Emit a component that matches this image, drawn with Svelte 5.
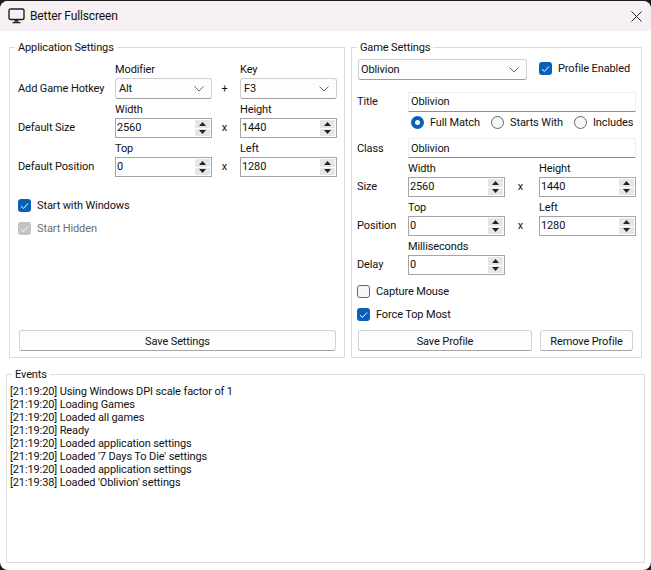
<script>
  const log = [
    "[21:19:20] Using Windows DPI scale factor of 1",
    "[21:19:20] Loading Games",
    "[21:19:20] Loaded all games",
    "[21:19:20] Ready",
    "[21:19:20] Loaded application settings",
    "[21:19:20] Loaded '7 Days To Die' settings",
    "[21:19:20] Loaded application settings",
    "[21:19:38] Loaded 'Oblivion' settings"
  ];
</script>

{#snippet spin(value)}
  <div class="spin">
    <span class="val">{value}</span>
    <div class="arrows">
      <div class="arrow"><svg width="7" height="4" viewBox="0 0 7 4"><path d="M3.500 0 7 4H0z" fill="#222"/></svg></div>
      <div class="arrow"><svg width="7" height="4" viewBox="0 0 7 4"><path d="M0 0h7L3.500 4z" fill="#222"/></svg></div>
    </div>
  </div>
{/snippet}

{#snippet combo(value, cls = "")}
  <div class="combo {cls}">
    <span>{value}</span>
    <svg width="10" height="6" viewBox="0 0 10 6"><path d="M.5.5 5 5 9.500.5" fill="none" stroke="#666" stroke-width="1"/></svg>
  </div>
{/snippet}

{#snippet check(label, state = "on")}
  <div class="check {state}">
    <span class="box">
      {#if state !== "off"}
        <svg width="9" height="8" viewBox="0 0 9 8"><path d="M1 4.200 3.400 6.500 8 1.500" fill="none" stroke="#fff" stroke-width="1"/></svg>
      {/if}
    </span>
    <span>{label}</span>
  </div>
{/snippet}

{#snippet radio(label, on = false)}
  <div class="radio">
    <span class="dot" class:on></span>
    <span>{label}</span>
  </div>
{/snippet}

<div class="window">
  <header class="title">
    <svg class="monitor" width="17" height="16" viewBox="0 0 17 16">
      <rect x="1" y="1" width="15" height="10.500" rx="1.500" fill="none" stroke="#222" stroke-width="1.400"/>
      <path d="M6.500 12h4v1.800h-4zM4.500 14h8v1.200h-8z" fill="#222"/>
    </svg>
    <span class="name">Better Fullscreen</span>
    <svg class="close" width="11" height="11" viewBox="0 0 11 11"><path d="M.5.5l10 10M10.500.5l-10 10" stroke="#222" stroke-width="1" fill="none"/></svg>
  </header>

  <div class="top">
    <section class="group app">
      <span class="legend">Application Settings</span>
      <div class="form">
        <span class="cap c2">Modifier</span><span class="cap c4">Key</span>
        <span class="lab c1">Add Game Hotkey</span>
        {@render combo("Alt")}
        <span class="sep">+</span>
        {@render combo("F3")}
      </div>
      <div class="form">
        <span class="cap c2">Width</span><span class="cap c4">Height</span>
        <span class="lab c1">Default Size</span>
        {@render spin("2560")}
        <span class="sep">x</span>
        {@render spin("1440")}
      </div>
      <div class="form">
        <span class="cap c2">Top</span><span class="cap c4">Left</span>
        <span class="lab c1">Default Position</span>
        {@render spin("0")}
        <span class="sep">x</span>
        {@render spin("1280")}
      </div>
      <div class="checks">
        {@render check("Start with Windows")}
        {@render check("Start Hidden", "dis")}
      </div>
      <button class="btn save">Save Settings</button>
    </section>

    <section class="group game">
      <span class="legend">Game Settings</span>
      <div class="profile">
        {@render combo("Oblivion", "wide")}
        {@render check("Profile Enabled")}
      </div>
      <div class="line title-row">
        <span class="lab">Title</span>
        <div class="text">Oblivion</div>
      </div>
      <div class="radios">
        {@render radio("Full Match", true)}
        {@render radio("Starts With")}
        {@render radio("Includes")}
      </div>
      <div class="line class-row">
        <span class="lab">Class</span>
        <div class="text">Oblivion</div>
      </div>
      <div class="form g">
        <span class="cap c2">Width</span><span class="cap c4">Height</span>
        <span class="lab c1">Size</span>
        {@render spin("2560")}
        <span class="sep">x</span>
        {@render spin("1440")}
      </div>
      <div class="form g">
        <span class="cap c2">Top</span><span class="cap c4">Left</span>
        <span class="lab c1">Position</span>
        {@render spin("0")}
        <span class="sep">x</span>
        {@render spin("1280")}
      </div>
      <div class="form g">
        <span class="cap c2">Milliseconds</span>
        <span class="lab c1">Delay</span>
        {@render spin("0")}
      </div>
      <div class="checks two">
        {@render check("Capture Mouse", "off")}
        {@render check("Force Top Most")}
      </div>
      <div class="btns">
        <button class="btn sp">Save Profile</button>
        <button class="btn rm">Remove Profile</button>
      </div>
    </section>
  </div>

  <section class="group events">
    <span class="legend">Events</span>
    <div class="log">
      {#each log as l}<div>{l}</div>{/each}
    </div>
  </section>
</div>

<style>
  :global(body) { margin: 0; background: #1c1c1c; }
  .window {
    width: 651px; height: 569px; margin-top: 1px; background: #fff;
    border-radius: 8px; overflow: hidden;
    font: 11px/15px Roboto, "Open Sans", sans-serif; color: #111; letter-spacing: -0.12px;
    display: flex; flex-direction: column;
  }
  .title {
    height: 30px; flex: none; background: #f6eff3; display: flex; align-items: center;
    padding: 0 9px 0 8px;
  }
  .monitor { margin-right: 5px; }
  .name { flex: 1; font-size: 12px; }
  .top { display: flex; gap: 6px; padding: 16px 9px 0 9px; height: 311px; flex: none; }
  .group { border: 1px solid #dcdcdc; position: relative; box-sizing: border-box; }
  .legend { position: absolute; top: -8px; left: 5px; background: #fff; padding: 0 3px; }
  .app { width: 336px; padding: 11px 7px 6px 8px; display: flex; flex-direction: column; }
  .game { width: 291px; padding: 11px 5px 6px 6px; display: flex; flex-direction: column; }
  .form { display: grid; grid-template-columns: 97px 97px 28px 97px; grid-template-rows: 19px 21px; align-items: center; }
  .form.g { grid-template-columns: 50px 97px 34px 97px; }
  .form + .form + .form, .g + .g { margin-top: -1px; }
  .cap { grid-row: 1; padding-top: 2px; }
  .c2 { grid-column: 2; }
  .c4 { grid-column: 4; }
  .c1 { grid-column: 1; grid-row: 2; }
  .g .c1 { margin-left: -1px; }
  .form + .form .c1, .g .c1, .form + .form .sep, .g .sep { align-self: start; margin-top: 2px; }
  .form .combo, .form .spin, .sep { grid-row: 2; }
  .form .spin { align-self: start; }
  .sep { text-align: center; padding-right: 3px; }
  .combo {
    height: 21px; box-sizing: border-box; border: 1px solid #cfcfcf; border-bottom-color: #9c9c9c;
    border-radius: 3px; background: #fdfdfd; display: flex; align-items: center;
    justify-content: space-between; padding: 0 7px 0 3px;
  }
  .wide { width: 169px; flex: none; padding-left: 2px; }
  .spin {
    height: 20px; box-sizing: border-box; border: 1px solid #a5a5a5; background: #fff;
    display: flex; justify-content: space-between; padding-left: 1px; align-items: stretch;
  }
  .val { line-height: 18px; }
  .arrows { width: 15px; display: flex; flex-direction: column; gap: 1px; padding: 1px; background: #fff; }
  .arrow { flex: 1; background: #e6e6e6; display: flex; align-items: center; justify-content: center; }
  .checks { display: flex; flex-direction: column; gap: 8px; margin-top: 20px; }
  .checks.two { margin-top: 8px; margin-left: -1px; }
  .check { display: flex; align-items: center; gap: 6px; height: 15px; white-space: nowrap; }
  .box {
    width: 13px; height: 13px; box-sizing: border-box; border-radius: 3px; flex: none;
    background: #0a5fb8; display: flex; align-items: center; justify-content: center;
  }
  .check.off .box { background: #f7f7f7; border: 1px solid #666; }
  .check.dis { color: #6d6d6d; }
  .check.dis .box { background: #c3c3c3; }
  .btn {
    height: 21px; box-sizing: border-box; border: 1px solid #d2d2d2; border-bottom-color: #a5a5a5;
    border-radius: 3px; background: #fdfdfd; font: inherit; letter-spacing: inherit; color: #111; padding: 1px 0 0;
  }
  .save { margin-top: auto; margin-left: 1px; width: 317px; }
  .profile { display: flex; gap: 12px; }
  .profile .check { margin-top: 2px; }
  .line { display: flex; }
  .title-row { margin-top: 12px; }
  .class-row { margin-top: 8px; }
  .line .lab { width: 51px; margin-left: -1px; line-height: 18px; padding-top: 1px; }
  .class-row .lab { padding-top: 2px; }
  .text {
    width: 228px; height: 20px; box-sizing: border-box; border: 1px solid #eee; border-bottom-color: #8f8f8f;
    padding-left: 2px; line-height: 18px;
  }
  .class-row .text { padding-top: 1px; }
  .radios { display: flex; margin: 3px 0 0 53px; height: 15px; align-items: center; white-space: nowrap; }
  .radio { display: flex; align-items: center; gap: 6px; flex: none; width: 80px; }
  .radio + .radio { width: 83px; }
  .dot { width: 13px; height: 13px; box-sizing: border-box; border-radius: 50%; border: 1px solid #666; background: #f7f7f7; flex: none; }
  .dot.on { border: 4px solid #0a5fb8; background: #fff; }
  .btns { display: flex; margin-top: auto; gap: 8px; }
  .sp { width: 174px; }
  .rm { width: 93px; }
  .events { margin: 16px 6px 7px 6px; flex: 1; }
  .log { padding: 10px 3px; line-height: 13px; }
</style>
